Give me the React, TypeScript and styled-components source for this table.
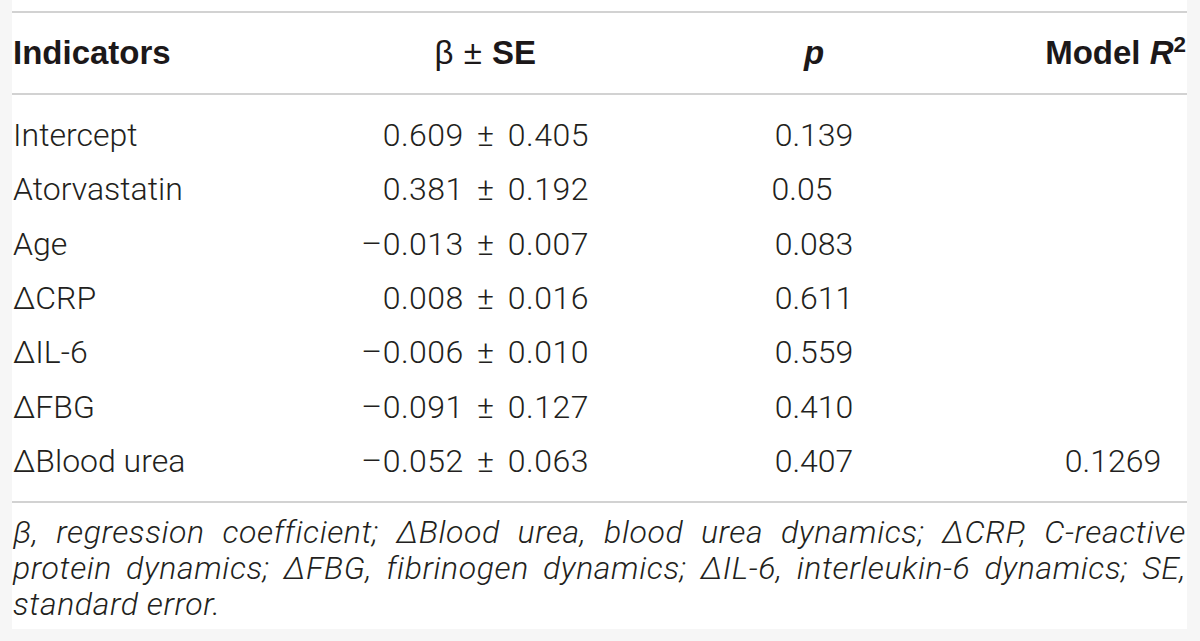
import React from "react";
import styled, { createGlobalStyle } from "styled-components";

const Global = createGlobalStyle`
  html, body { margin: 0; padding: 0; background: #f6f6f6; }
  body { font-family: "Liberation Sans", Arial, sans-serif; color: #231f20; }
`;

const Panel = styled.div`
  width: 1175px;
  margin-left: 12px;
  background: #ffffff;
  padding: 11px 0 7px;
`;

const Grid = styled.div`
  display: grid;
  grid-template-columns: 318px 259px 450px 148px;
`;

const HeadRow = styled(Grid)`
  border-top: 2px solid #d2d2d2;
  border-bottom: 2px solid #d2d2d2;
  height: 80px;
  align-items: center;
`;

const Body = styled.div`
  padding: 13px 0 13px;
  border-bottom: 2px solid #d2d2d2;
`;

const Row = styled(Grid)`
  height: 54.3px;
  align-items: center;
`;

type Align = "left" | "right" | "center";

const HeadCell = styled.div<{ $align: Align; $pr?: number; $pl?: number; $ws?: number }>`
  font-family: "Liberation Sans", Arial, sans-serif;
  font-size: 33px;
  font-weight: 700;
  color: #1c1819;
  text-align: ${(p) => p.$align};
  padding-right: ${(p) => p.$pr ?? 0}px;
  padding-left: ${(p) => p.$pl ?? 0}px;
  word-spacing: ${(p) => p.$ws ?? 0}px;
  white-space: nowrap;
`;

const Cell = styled.div<{ $align: Align; $pr?: number; $pl?: number }>`
  font-family: Roboto, "Liberation Sans", sans-serif;
  font-size: 32px;
  font-weight: 300;
  color: #231f20;
  text-align: ${(p) => p.$align};
  padding-right: ${(p) => p.$pr ?? 0}px;
  padding-left: ${(p) => p.$pl ?? 0}px;
  white-space: nowrap;
`;

const Num = styled.span`
  word-spacing: 5px;
  letter-spacing: 0.5px;
`;

const Reg = styled.span`
  font-weight: 400;
`;

const It = styled.i`
  font-style: italic;
`;

const Sup = styled.sup`
  font-size: 0.68em;
  vertical-align: 0.55em;
  line-height: 0;
`;

const Foot = styled.div`
  padding: 11px 1px 0;
  font-family: Roboto, "Liberation Sans", sans-serif;
  font-size: 32px;
  font-weight: 300;
  font-style: italic;
  letter-spacing: 0.6px;
  line-height: 36px;
  color: #231f20;
`;

const FootLine = styled.div<{ $last?: boolean }>`
  text-align: ${(p) => (p.$last ? "left" : "justify")};
  text-align-last: ${(p) => (p.$last ? "left" : "justify")};
  white-space: nowrap;
`;

const rows: { name: string; beta: string; p: string; r2?: string; pShift?: number }[] = [
  { name: "Intercept", beta: "0.609 ± 0.405", p: "0.139" },
  { name: "Atorvastatin", beta: "0.381 ± 0.192", p: "0.05", pShift: 24 },
  { name: "Age", beta: "–0.013 ± 0.007", p: "0.083" },
  { name: "ΔCRP", beta: "0.008 ± 0.016", p: "0.611" },
  { name: "ΔIL-6", beta: "–0.006 ± 0.010", p: "0.559" },
  { name: "ΔFBG", beta: "–0.091 ± 0.127", p: "0.410" },
  { name: "ΔBlood urea", beta: "–0.052 ± 0.063", p: "0.407", r2: "0.1269" },
];

export default function App() {
  return (
    <>
      <Global />
      <Panel>
        <HeadRow>
          <HeadCell $align="left" $pl={1}>Indicators</HeadCell>
          <HeadCell $align="right" $pr={53} $ws={1}>
            <Reg>β ±</Reg> SE
          </HeadCell>
          <HeadCell $align="center">
            <It>p</It>
          </HeadCell>
          <HeadCell $align="right" $pr={1}>
            Model <It>R</It>
            <Sup>2</Sup>
          </HeadCell>
        </HeadRow>
        <Body>
          {rows.map((r) => (
            <Row key={r.name}>
              <Cell $align="left" $pl={1}>{r.name}</Cell>
              <Cell $align="right">
                <Num>{r.beta}</Num>
              </Cell>
              <Cell $align="center" $pr={r.pShift}>{r.p}</Cell>
              <Cell $align="center">{r.r2 ?? ""}</Cell>
            </Row>
          ))}
        </Body>
        <Foot>
          <FootLine>
            β, regression coefficient; ΔBlood urea, blood urea dynamics; ΔCRP, C-reactive
          </FootLine>
          <FootLine>
            protein dynamics; ΔFBG, fibrinogen dynamics; ΔIL-6, interleukin-6 dynamics; SE,
          </FootLine>
          <FootLine $last>standard error.</FootLine>
        </Foot>
      </Panel>
    </>
  );
}
